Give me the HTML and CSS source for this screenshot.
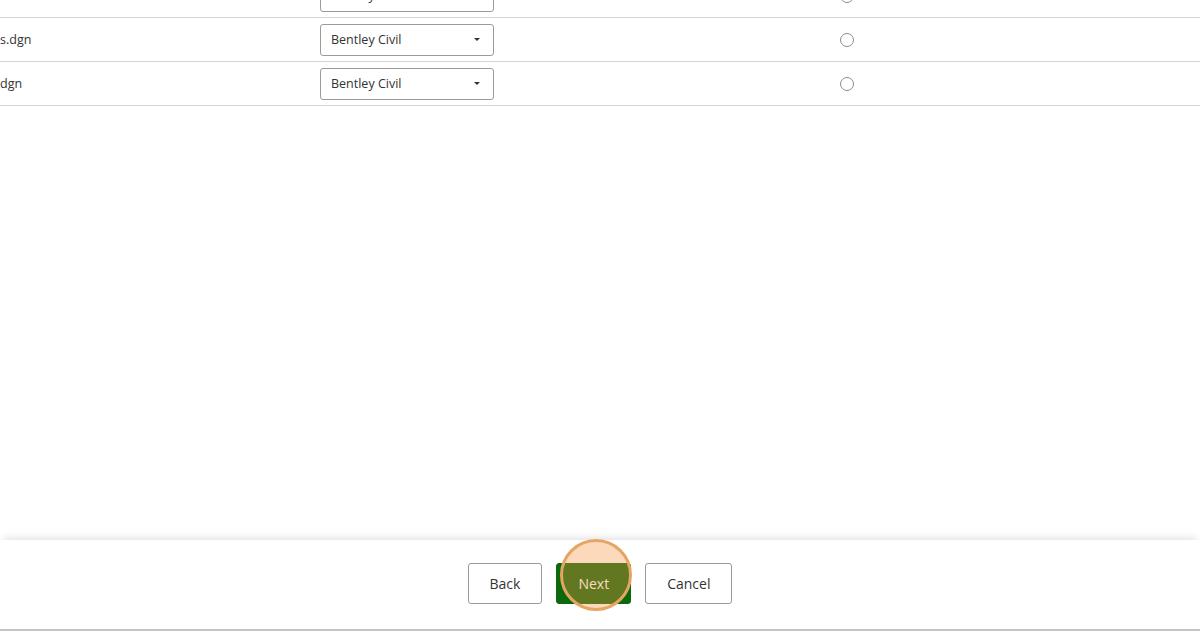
FILE: index.html
```html
<!DOCTYPE html>
<html lang="en">
<head>
  <meta charset="UTF-8" />
  <title>Import files</title>
  <link rel="stylesheet" href="styles.css">
</head>
<body>
  <div class="page">
    <div class="content">
      <div class="file-table">
        <div class="row">
          <div class="cell name"></div>
          <div class="cell type">
            <div class="select"><span>Bentley Civil</span><span class="caret"></span></div>
          </div>
          <div class="cell master"><span class="radio"></span></div>
        </div>
        <div class="row">
          <div class="cell name">s.dgn</div>
          <div class="cell type">
            <div class="select"><span>Bentley Civil</span><span class="caret"></span></div>
          </div>
          <div class="cell master"><span class="radio"></span></div>
        </div>
        <div class="row">
          <div class="cell name">dgn</div>
          <div class="cell type">
            <div class="select"><span>Bentley Civil</span><span class="caret"></span></div>
          </div>
          <div class="cell master"><span class="radio"></span></div>
        </div>
      </div>
    </div>
    <div class="footer">
      <button class="btn">Back</button>
      <button class="btn btn-primary">Next<span class="highlight"></span></button>
      <button class="btn">Cancel</button>
    </div>
  </div>
</body>
</html>
```

FILE: styles.css
```css
body {
  margin: 0;
  font-family: 'Open Sans', 'Noto Sans', sans-serif;
  color: #333;
  background: #fff;
  overflow: hidden;
}
.page {
  height: 631px;
  display: flex;
  flex-direction: column;
}
.content {
  flex: 1;
  overflow: hidden;
}
.file-table {
  margin-top: -26px;
}
.row {
  display: grid;
  grid-template-columns: 320px 174px 1fr;
  align-items: center;
  height: 43px;
  border-bottom: 1px solid #d4d4d4;
  font-size: 12.5px;
}
.select {
  box-sizing: border-box;
  height: 32px;
  border: 1px solid #9a9a9a;
  border-radius: 3px;
  display: flex;
  align-items: center;
  justify-content: space-between;
  padding: 0 13px 0 10px;
  color: #333;
}
.caret {
  width: 0;
  height: 0;
  border-left: 3px solid transparent;
  border-right: 3px solid transparent;
  border-top: 3px solid #333;
}
.master {
  padding-left: 346px;
  display: flex;
}
.radio {
  box-sizing: border-box;
  width: 14px;
  height: 14px;
  border: 1px solid #8c8c8c;
  border-radius: 50%;
}
.footer {
  box-sizing: border-box;
  height: 91px;
  padding-bottom: 2px;
  border-bottom: 2px solid #c4c4c4;
  box-shadow: 0 -6px 8px -4px rgba(0,0,0,0.12);
  display: flex;
  justify-content: center;
  align-items: center;
  gap: 12px;
}
.btn {
  position: relative;
  height: 41px;
  padding: 0 21px;
  font-family: inherit;
  font-size: 14px;
  color: #333;
  background: #fff;
  border: 1px solid #9a9a9a;
  border-radius: 3px;
}
.btn-primary {
  background: #0b680b;
  border-color: #0b680b;
  color: #fff;
  margin: 0 2px 0 2px;
}
.highlight {
  position: absolute;
  left: 50%;
  top: 50%;
  width: 72px;
  height: 72px;
  margin: -45px 0 0 -34px;
  box-sizing: border-box;
  border-radius: 50%;
  border: 3px solid #e4a565;
  background: rgba(250, 150, 70, 0.36);
}
```
